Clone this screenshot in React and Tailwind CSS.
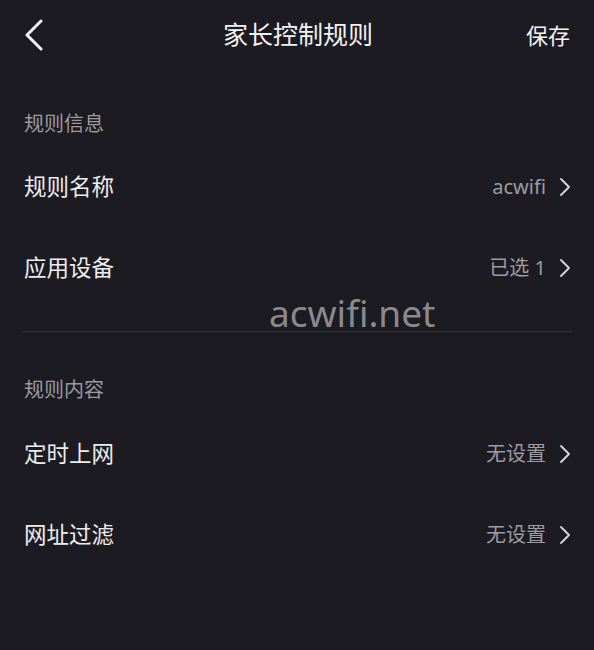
import React from 'react';

const font = { fontFamily: '"Noto Sans", "Noto Sans CJK SC", sans-serif' };

const Chevron = () => (
  <svg width="12" height="20" viewBox="0 0 12 20" className="ml-[13px]" fill="none">
    <path d="M2 2 L10 10 L2 18" stroke="#d8d8dc" strokeWidth="1.8" strokeLinecap="round" strokeLinejoin="round" />
  </svg>
);

function Row({ label, value }) {
  return (
    <div className="h-[81px] flex items-center justify-between">
      <span className="text-[22.5px] text-[#ededf0]">{label}</span>
      <div className="flex items-center -mr-[1px]">
        <span className="text-[20px] text-[#9c9ca2]">{value}</span>
        <Chevron />
      </div>
    </div>
  );
}

function SectionLabel({ children, className = '' }) {
  return <div className={`h-[28px] leading-[28px] text-[20px] text-[#9a9aa0] ${className}`}>{children}</div>;
}

export default function App() {
  return (
    <div className="relative w-[594px] h-[650px] bg-[#1c1b21] overflow-hidden" style={font}>
      {/* Header */}
      <div className="relative h-[70px] flex items-center justify-between px-6">
        <svg width="20" height="32" viewBox="0 0 20 32" fill="none">
          <path d="M17 2 L3 16 L17 30" stroke="#f2f2f4" strokeWidth="3" strokeLinecap="round" strokeLinejoin="round" />
        </svg>
        <div className="absolute left-0 right-0 pl-[2px] text-center text-[25px] text-[#f2f2f4] pointer-events-none">家长控制规则</div>
        <span className="text-[22px] text-[#f2f2f4]">保存</span>
      </div>

      <div className="px-6">
        <SectionLabel className="mt-[40px]">规则信息</SectionLabel>
        <div className="mt-[8px]">
          <Row label="规则名称" value="acwifi" />
          <Row label="应用设备" value="已选 1" />
        </div>
        <div className="mt-[23px] h-px bg-[#34333a] -mx-[2px]" />
        <SectionLabel className="mt-[44px]">规则内容</SectionLabel>
        <div className="mt-[9px]">
          <Row label="定时上网" value="无设置" />
          <Row label="网址过滤" value="无设置" />
        </div>
      </div>

      {/* watermark */}
      <div className="absolute left-[269px] top-[290px] text-[37px] leading-[46px] text-[#8a8a8e] pointer-events-none">acwifi.net</div>
    </div>
  );
}
